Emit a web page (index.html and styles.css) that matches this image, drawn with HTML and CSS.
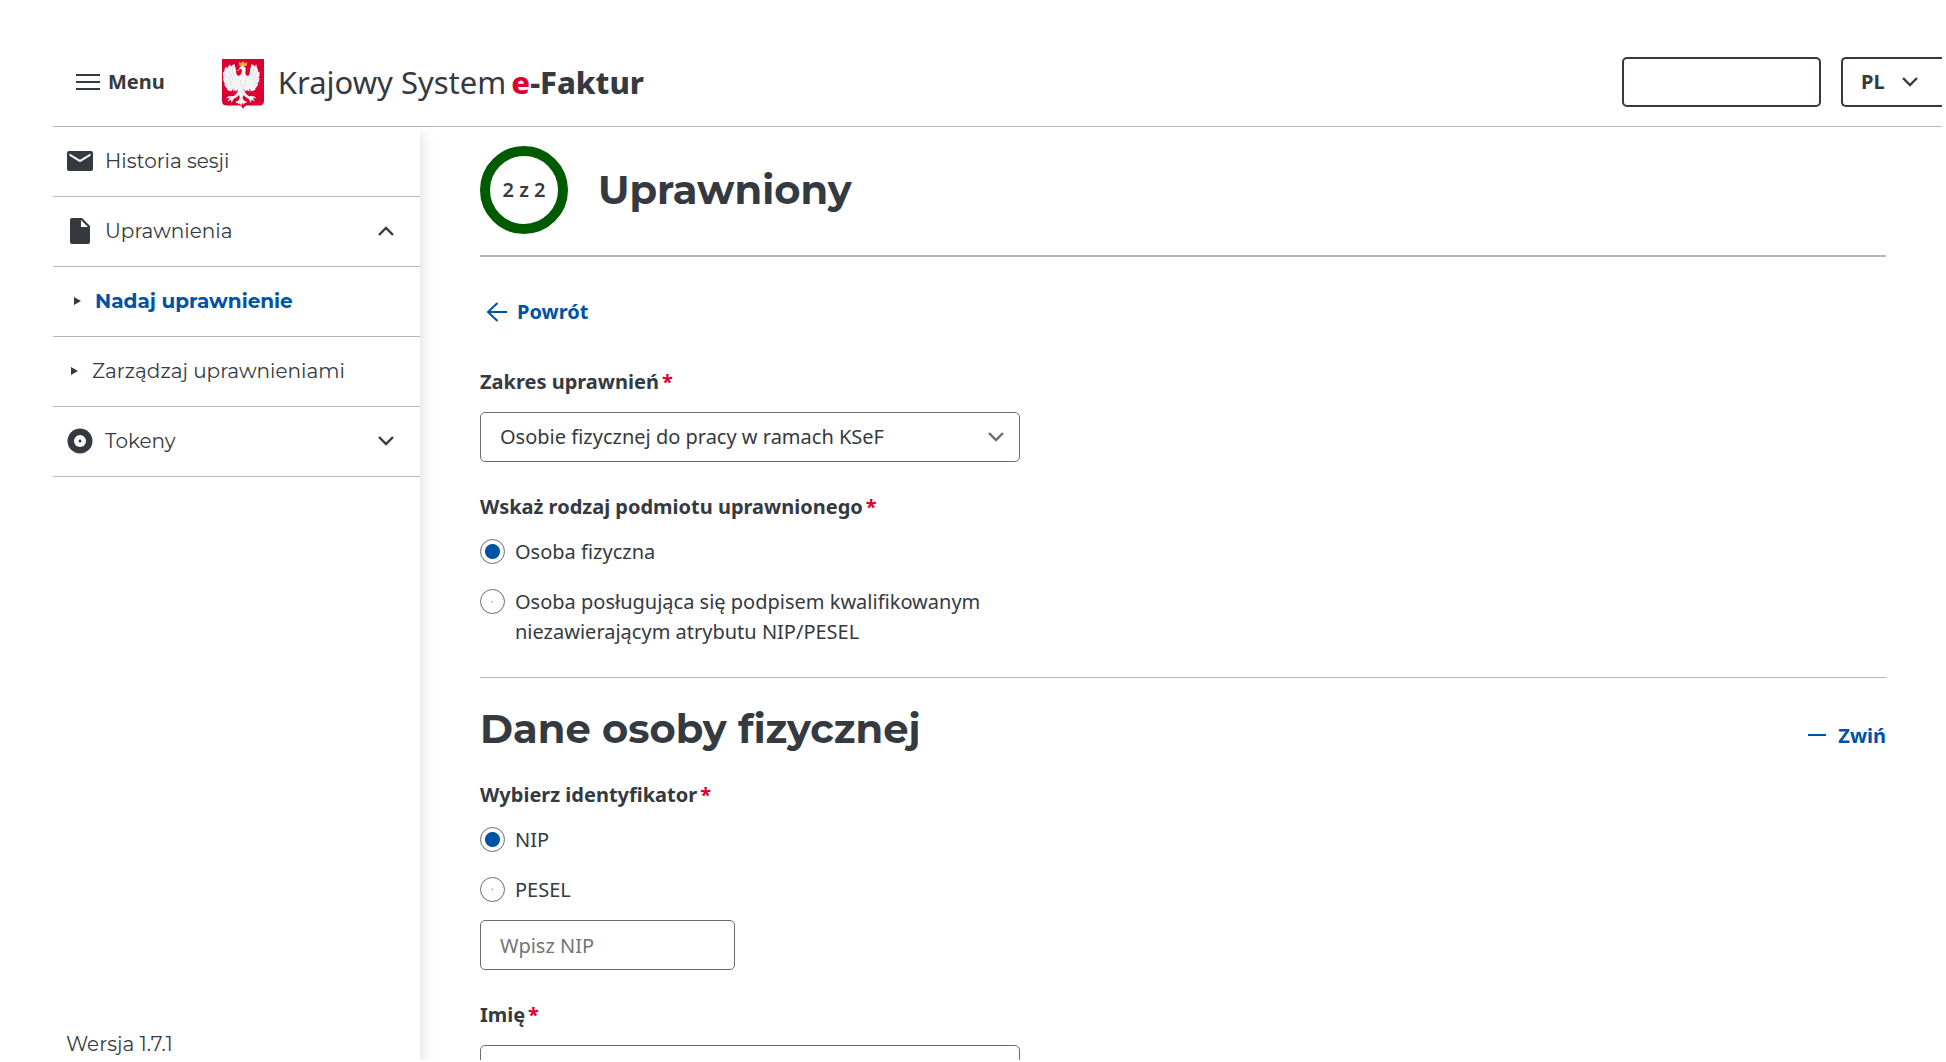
FILE: index.html
```html
<!DOCTYPE html>
<html lang="pl">
<head>
    <meta charset="UTF-8">
    <meta name="viewport" content="width=device-width, initial-scale=1.0">
    <title>Krajowy System e-Faktur</title>
    <link rel="stylesheet" href="styles.css">
</head>
<body>
    <div class="page">
        <header class="header">
            <button type="button" class="menu-btn">
                <svg class="menu-icon" viewBox="0 0 24 18" aria-hidden="true"><path d="M0 2h24M0 9h24M0 16h24"/></svg>
                Menu
            </button>
            <a href="#" class="logo">
                <svg class="emblem" viewBox="0 0 42 50" aria-hidden="true">
                    <path class="shield" d="M0 0h42v42q0 4.500-5 4.500H25q-2.500 0-4 3.500q-1.500-3.500-4-3.500H5q-5 0-5-4.500z"/>
                    <path class="eagle" d="M20 7q-3 1-3 3.500l2.500-.5q1 2-.5 5q-1.500 2.500-3.500 1.500q-1.500-1-1.500-5.500L12.500 5q-2 .5-3.500 2.500L8 5.500Q6 7 5.200 9.500L4 7.500Q2 10 2 13.500L1 12.500q-.5 4 .8 6.500l-1-.3q.4 3.500 2.200 6.300l-1-.1q1.500 3.500 3.500 4.800l-1 .3q2 2.300 5 2.300l2-3l-.5 3.500l2.500-2l.2 2l2.500-2.300q-1 4.500-4.500 6.500l-5.200.2l-2.500 2l3.500-.1l-2 3.400l3.500-1.700l.4 3.300l2.500-4.300q3-.8 5.100-3.700l.8 3l-1.800 3l-1.500-.2l-1 2.200l2.200-.3l.8 2l1.500-1.700l1.200 3.500l1.200-3.500l1.500 1.700l.8-2l2.200.3l-1-2.200l-1.500.2l-1.800-3l.8-3q2.100 2.900 5.100 3.700l2.500 4.300l.4-3.300l3.500 1.700l-2-3.400l3.500.1l-2.500-2l-5.200-.2q-3.500-2-4.500-6.500l2.500 2.300l.2-2l2.500 2l-.5-3.500l2 3q3 0 5-2.300l-1-.3q2-1.300 3.500-4.800l-1 .1q1.800-2.800 2.200-6.300l-1 .3q1.300-2.500.8-6.500l-1 1q0-3.500-2-6l-1.200 2Q36 7 34 5.500l-1 2q-1.500-2-3.500-2.500L28 11q0 4.500-1.500 5.500q-2 1-3-1.500q-.3-2 .3-4q0-4-3.800-4z"/>
                    <path class="feathers" d="M7 12l4 9M4 16l6 8M4 22l6 4M10 9l2 9M35 12l-4 9M38 16l-6 8M38 22l-6 4M32 9l-2 9M18 21l2 7M24 21l-2 7M21 29v6"/>
                    <path class="gold" d="M17.500 7l-.7-4l2.500 1.300L21 2l1.700 2.300L25.200 3L24.500 7zM16.500 10.500l-2 1l2.500.7z"/>
                </svg>
                <span class="logo-text">Krajowy System<strong><span class="red">e</span>-Faktur</strong></span>
            </a>
            <div class="header-actions">
                <button type="button" class="outline-btn user-btn" aria-label="Użytkownik"></button>
                <button type="button" class="outline-btn lang-btn">
                    PL
                    <svg class="chevron" viewBox="0 0 16 10" aria-hidden="true"><path d="M1 1l7 7 7-7"/></svg>
                </button>
            </div>
        </header>

        <div class="layout">
            <aside class="sidebar">
                <nav>
                    <ul class="nav-list">
                        <li>
                            <a href="#" class="nav-item">
                                <svg class="nav-icon" viewBox="0 0 26 26" aria-hidden="true"><path d="M2 3h22q2 0 2 2v16q0 2-2 2H2q-2 0-2-2V5q0-2 2-2zM2.500 5.500v2.300L13 14.300l10.500-6.500V5.500L13 11.800z" fill-rule="evenodd"/></svg>
                                Historia sesji
                            </a>
                        </li>
                        <li>
                            <a href="#" class="nav-item">
                                <svg class="nav-icon" viewBox="0 0 26 26" aria-hidden="true"><path d="M5 0h10l8 8v16q0 2-2 2H5q-2 0-2-2V2q0-2 2-2zM14 2v7h7z" fill-rule="evenodd"/></svg>
                                Uprawnienia
                                <svg class="chevron nav-chevron" viewBox="0 0 16 10" aria-hidden="true"><path d="M1 9l7-7 7 7"/></svg>
                            </a>
                        </li>
                        <li>
                            <a href="#" class="nav-item nav-sub active">
                                <svg class="nav-arrow" viewBox="0 0 7 8" aria-hidden="true"><path d="M0 0l7 4-7 4z"/></svg>
                                Nadaj uprawnienie
                            </a>
                        </li>
                        <li>
                            <a href="#" class="nav-item nav-sub">
                                <svg class="nav-arrow" viewBox="0 0 7 8" aria-hidden="true"><path d="M0 0l7 4-7 4z"/></svg>
                                Zarządzaj uprawnieniami
                            </a>
                        </li>
                        <li>
                            <a href="#" class="nav-item">
                                <svg class="nav-icon" viewBox="0 0 26 26" aria-hidden="true"><circle cx="13" cy="13" r="12.500"/><circle class="hole" cx="13" cy="13" r="6"/><circle cx="13" cy="13" r="1.500"/></svg>
                                Tokeny
                                <svg class="chevron nav-chevron" viewBox="0 0 16 10" aria-hidden="true"><path d="M1 1l7 7 7-7"/></svg>
                            </a>
                        </li>
                    </ul>
                </nav>
                <p class="version">Wersja 1.7.1</p>
            </aside>

            <main class="content">
                <div class="step-header">
                    <div class="step-circle">2 z 2</div>
                    <h1>Uprawniony</h1>
                </div>

                <a href="#" class="link back-link">
                    <svg class="back-icon" viewBox="0 0 20 20" aria-hidden="true"><path d="M20 10H1M10.500 1L1 10l9.500 9"/></svg>
                    Powrót
                </a>

                <form>
                    <div class="field">
                        <label class="label" for="scope">Zakres uprawnień<span class="required">*</span></label>
                        <div class="select-wrap">
                            <select id="scope" class="input">
                                <option>Osobie fizycznej do pracy w ramach KSeF</option>
                            </select>
                            <svg class="chevron select-chevron" viewBox="0 0 16 10" aria-hidden="true"><path d="M1 1l7 7 7-7"/></svg>
                        </div>
                    </div>

                    <fieldset class="field">
                        <legend class="label">Wskaż rodzaj podmiotu uprawnionego<span class="required">*</span></legend>
                        <div class="radio-group">
                            <label class="radio"><input type="radio" name="subject" checked> Osoba fizyczna</label>
                            <label class="radio"><input type="radio" name="subject"> Osoba posługująca się podpisem kwalifikowanym niezawierającym atrybutu NIP/PESEL</label>
                        </div>
                    </fieldset>

                    <section class="section">
                        <div class="section-header">
                            <h2>Dane osoby fizycznej</h2>
                            <button type="button" class="link toggle-btn">
                                <svg class="minus-icon" viewBox="0 0 18 6" aria-hidden="true"><path d="M0 2h18"/></svg>
                                Zwiń
                            </button>
                        </div>

                        <fieldset class="field">
                            <legend class="label">Wybierz identyfikator<span class="required">*</span></legend>
                            <div class="radio-group">
                                <label class="radio"><input type="radio" name="identifier" checked> NIP</label>
                                <label class="radio"><input type="radio" name="identifier"> PESEL</label>
                            </div>
                            <input type="text" class="input input-short" placeholder="Wpisz NIP" aria-label="NIP">
                        </fieldset>

                        <div class="field">
                            <label class="label" for="first-name">Imię<span class="required">*</span></label>
                            <input type="text" id="first-name" class="input">
                        </div>
                    </section>
                </form>
            </main>
        </div>
    </div>
</body>
</html>
```

FILE: styles.css
```css
* {
    margin: 0;
    padding: 0;
    box-sizing: border-box;
}

body {
    font-family: 'Noto Sans', 'Open Sans', sans-serif;
    font-size: 20px;
    line-height: 30px;
    color: #343a40;
    background-color: #fff;
    overflow: hidden;
}

button, input, select {
    font: inherit;
    color: inherit;
    background: none;
}

a {
    color: inherit;
    text-decoration: none;
}

svg {
    flex-shrink: 0;
    fill: none;
    stroke: currentColor;
}

fieldset {
    border: none;
    min-width: 0;
}

.page {
    height: calc(100vh - 2px);
    margin: 0 4px 0 53px;
    display: flex;
    flex-direction: column;
    overflow: hidden;
}

/* Header */
.header {
    display: flex;
    align-items: center;
    padding: 55px 0 17px 23px;
    border-bottom: 1px solid #b8b8b8;
}

.menu-btn {
    display: flex;
    align-items: center;
    gap: 8px;
    border: none;
    font-weight: 700;
    cursor: pointer;
}

.menu-icon {
    width: 24px;
    height: 18px;
    stroke-width: 2;
}

.logo {
    display: flex;
    align-items: center;
    gap: 14px;
    margin-left: 57px;
}

.emblem {
    width: 42px;
    height: 50px;
    margin-top: 4px;
    stroke: none;
}

.shield {
    fill: #dc0032;
}

.eagle {
    fill: #f4f4f6;
}

.feathers {
    stroke: #cfcfd6;
    stroke-width: 0.6;
}

.gold {
    fill: #f2b632;
}

.logo-text {
    font-size: 31px;
}

.logo-text strong {
    margin-left: 5px;
    font-weight: 800;
}

.red,
.required {
    color: #dc0032;
}

.header-actions {
    display: flex;
    gap: 20px;
    margin-left: auto;
}

.outline-btn {
    height: 50px;
    border: 2px solid #343a40;
    border-radius: 5px;
    font-weight: 700;
    cursor: pointer;
}

.user-btn {
    width: 199px;
}

.lang-btn {
    display: flex;
    align-items: center;
    gap: 17px;
    width: 101px;
    padding-left: 18px;
    border-right: none;
    border-radius: 5px 0 0 5px;
}

.chevron {
    width: 16px;
    height: 10px;
    stroke-width: 2.4;
}

/* Sidebar */
.layout {
    flex: 1;
    display: flex;
    min-height: 0;
}

.sidebar {
    width: 367px;
    flex-shrink: 0;
    display: flex;
    flex-direction: column;
    justify-content: space-between;
    font-family: 'Montserrat', 'Inter', sans-serif;
    font-weight: 400;
    box-shadow: 4px 6px 12px rgba(0, 0, 0, 0.1);
}

.nav-list {
    list-style: none;
}

.nav-item {
    display: flex;
    align-items: center;
    gap: 12px;
    height: 70px;
    padding: 0 26px 1px 14px;
    border-bottom: 1px solid #b8b8b8;
}

.nav-icon {
    width: 26px;
    height: 26px;
    fill: currentColor;
    stroke: none;
}

.hole {
    fill: #fff;
}

.nav-chevron {
    margin-left: auto;
}

.nav-sub {
    gap: 14px;
    padding-left: 18px;
}

.nav-arrow {
    width: 7px;
    height: 8px;
    fill: #343a40;
    stroke: none;
}

.nav-sub.active {
    padding-left: 21px;
    color: #0052a5;
    font-weight: 700;
}

.version {
    padding: 0 13px 1px;
}

/* Content */
.content {
    flex: 1;
    min-width: 0;
    padding: 19px 56px 0 60px;
}

.step-header {
    display: flex;
    align-items: center;
    gap: 30px;
    padding-bottom: 21px;
    border-bottom: 2px solid #b8b8b8;
}

.step-circle {
    display: flex;
    align-items: center;
    justify-content: center;
    width: 88px;
    height: 88px;
    border: 10px solid #005a00;
    border-radius: 50%;
    font-weight: 600;
}

h1, h2 {
    font-family: 'Montserrat', 'Inter', sans-serif;
    font-size: 40px;
    line-height: 50px;
    font-weight: 700;
}

.link {
    display: flex;
    align-items: center;
    color: #0052a5;
    font-weight: 700;
}

.back-link {
    width: fit-content;
    gap: 10px;
    margin: 40px 0;
    padding-left: 7px;
}

.back-icon {
    width: 20px;
    height: 20px;
    stroke-width: 2;
}

.field {
    margin-bottom: 30px;
}

.label {
    display: block;
    margin-bottom: 15px;
    font-weight: 700;
}

.required {
    margin-left: 3px;
}

.input {
    display: block;
    width: 100%;
    max-width: 540px;
    height: 50px;
    padding: 0 19px;
    border: 1px solid #6c6c6c;
    border-radius: 5px;
    appearance: none;
}

.input-short {
    max-width: 255px;
    margin-top: 15px;
}

.input::placeholder {
    color: #757575;
    opacity: 1;
}

.select-wrap {
    position: relative;
    max-width: 540px;
}

.select-chevron {
    position: absolute;
    top: 20px;
    right: 16px;
    color: #6c6c6c;
    pointer-events: none;
}

.radio-group {
    display: grid;
    gap: 20px;
    max-width: 540px;
}

.radio {
    display: flex;
    align-items: flex-start;
    gap: 10px;
}

.radio input {
    flex-shrink: 0;
    width: 25px;
    height: 25px;
    margin-top: 2px;
    border: 1px solid #6c6c6c;
    border-radius: 50%;
    appearance: none;
    background: radial-gradient(circle, #a9c3dd 1px, transparent 1px);
}

.radio input:checked {
    background: radial-gradient(circle, #0052a5 7px, transparent 8px);
}

.section {
    border-top: 1px solid #b8b8b8;
    padding-top: 26px;
}

.section-header {
    display: flex;
    align-items: flex-end;
    justify-content: space-between;
    margin-bottom: 26px;
}

.toggle-btn {
    gap: 12px;
    padding-bottom: 3px;
    border: none;
    cursor: pointer;
}

.minus-icon {
    width: 18px;
    height: 6px;
    stroke-width: 2;
}
```
